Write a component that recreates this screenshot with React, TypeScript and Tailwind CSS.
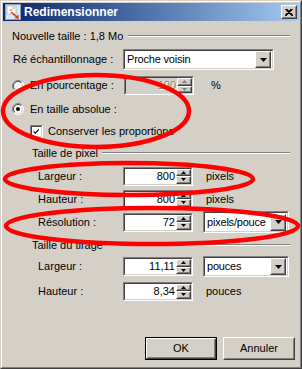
import type { ReactNode } from "react";

const font = { fontFamily: '"Liberation Sans", Arial, sans-serif' };

function Sunken({ className = "", inner = "bg-white", children }: { className?: string; inner?: string; children?: ReactNode }) {
  return (
    <div className={`border border-t-[#808080] border-l-[#808080] border-r-white border-b-white ${className}`}>
      <div className={`h-full w-full border border-t-[#404040] border-l-[#404040] border-r-[#d4d0c8] border-b-[#d4d0c8] flex items-center ${inner}`}>
        {children}
      </div>
    </div>
  );
}

function Raised({ className = "", children }: { className?: string; children?: ReactNode }) {
  return (
    <div className={`border border-t-white border-l-white border-r-[#404040] border-b-[#404040] bg-[#d4d0c8] ${className}`}>
      <div className="h-full w-full border border-t-[#d4d0c8] border-l-[#d4d0c8] border-r-[#808080] border-b-[#808080] flex items-center justify-center">
        {children}
      </div>
    </div>
  );
}

function Spinner({ disabled = false }: { disabled?: boolean }) {
  const c = disabled ? "#808080" : "#000";
  return (
    <div className="flex flex-col h-full w-[15px] shrink-0">
      <Raised className="flex-1">
        <svg width="5" height="3" viewBox="0 0 5 3"><path d="M2.5 0 L5 3 L0 3 Z" fill={c} /></svg>
      </Raised>
      <Raised className="flex-1">
        <svg width="5" height="3" viewBox="0 0 5 3"><path d="M0 0 L5 0 L2.5 3 Z" fill={c} /></svg>
      </Raised>
    </div>
  );
}

function NumField({ value, disabled = false }: { value: string; disabled?: boolean }) {
  return (
    <Sunken className="w-[70px] h-[19px]" inner={disabled ? "bg-[#d4d0c8]" : "bg-white"}>
      <span
        className={`flex-1 text-right pr-[1px] ${disabled ? "text-[#808080] [text-shadow:1px_1px_0_#fff]" : "text-black"}`}
      >
        {value}
      </span>
      <Spinner disabled={disabled} />
    </Sunken>
  );
}

function Select({ value, className = "" }: { value: string; className?: string }) {
  return (
    <Sunken className={className}>
      <span className="flex-1 pl-[2px] text-black whitespace-nowrap overflow-hidden tracking-[-0.2px]">{value}</span>
      <Raised className="w-[16px] h-[17px] mr-[1px] shrink-0">
        <svg width="7" height="4" viewBox="0 0 7 4"><path d="M0 0 L7 0 L3.5 4 Z" fill="#000" /></svg>
      </Raised>
    </Sunken>
  );
}

function Radio({ checked = false }: { checked?: boolean }) {
  return (
    <svg width="12" height="12" viewBox="0 0 12 12" className="shrink-0">
      <circle cx="6" cy="6" r="5.5" fill="white" />
      <path d="M2.1 9.9 A5.5 5.5 0 0 1 9.9 2.1" stroke="#808080" strokeWidth="1" fill="none" />
      <path d="M2.8 9.2 A4.5 4.5 0 0 1 9.2 2.8" stroke="#404040" strokeWidth="1" fill="none" />
      <path d="M9.9 2.1 A5.5 5.5 0 0 1 2.1 9.9" stroke="#ffffff" strokeWidth="1" fill="none" />
      <path d="M9.2 2.8 A4.5 4.5 0 0 1 2.8 9.2" stroke="#d4d0c8" strokeWidth="1" fill="none" />
      {checked && <circle cx="6" cy="6" r="2" fill="#000" />}
    </svg>
  );
}

function Checkbox() {
  return (
    <Sunken className="w-[13px] h-[13px] shrink-0">
      <svg width="11" height="11" viewBox="0 0 11 11">
        <path d="M2 4.5 L4 6.5 L8.5 2 L8.5 4 L4 8.5 L2 6.5 Z" fill="#000" />
      </svg>
    </Sunken>
  );
}

function Group({ label }: { label: string }) {
  return (
    <div className="flex items-center h-[14px] pl-[29px] pr-[9px]">
      <span className="whitespace-nowrap">{label}</span>
      <div className="flex-1 ml-[4px] border-t border-t-[#808080] border-b border-b-white" />
    </div>
  );
}

function Row({ label, children, className = "" }: { label: string; children: ReactNode; className?: string }) {
  return (
    <div className={`flex items-center pl-[35px] ${className}`}>
      <span className="w-[85px]">{label}</span>
      {children}
    </div>
  );
}

export default function App() {
  return (
    <div className="relative w-[302px] h-[369px] text-[11px] leading-none text-black select-none" style={font}>
      {/* WINDOW FRAME */}
      <div className="w-full h-full border border-t-[#d4d0c8] border-l-[#d4d0c8] border-r-[#404040] border-b-[#404040] bg-[#d4d0c8]">
        <div className="w-full h-full border border-t-white border-l-white border-r-[#808080] border-b-[#808080] p-[1px] flex flex-col">
          {/* TITLE BAR */}
          <div className="h-[18px] shrink-0 flex items-center bg-linear-to-r from-[#0a246a] to-[#a6caf0] pl-[2px] pr-[2px]">
            <svg width="16" height="16" viewBox="0 0 16 16" className="shrink-0">
              <rect x="0.5" y="0.5" width="15" height="15" fill="#dfe6ef" stroke="#8da2c0" />
              <rect x="2" y="2" width="9" height="8" fill="#fff" stroke="#9fb1c9" strokeWidth="0.8" />
              <path d="M4 7 L6 4.5 L8 7 Z" fill="#e8a060" />
              <circle cx="8.5" cy="4" r="1.2" fill="#f0c080" />
              <path d="M6 8 L13 14" stroke="#d04010" strokeWidth="1.6" />
              <path d="M13.8 14.8 L9.5 14.2 L13.2 10.5 Z" fill="#d04010" />
            </svg>
            <span className="ml-[3px] text-white font-bold text-[12px]">Redimensionner</span>
            <div className="flex-1" />
            <Raised className="w-[16px] h-[14px]">
              <svg width="8" height="7" viewBox="0 0 8 7">
                <path d="M0.5 0 L7.5 7 M1.5 0 L8 6.5 M7.5 0 L0.5 7 M6.5 0 L0 6.5" stroke="#000" strokeWidth="1.2" />
              </svg>
            </Raised>
          </div>

          {/* BODY */}
          <div className="flex flex-col">
            <div className="flex items-center h-[14px] mt-[8px] pl-[9px] pr-[9px]">
              <span className="whitespace-nowrap">Nouvelle taille : 1,8 Mo</span>
              <div className="flex-1 ml-[5px] border-t border-t-[#808080] border-b border-b-white" />
            </div>

            <div className="flex items-center mt-[6px] pl-[10px]">
              <span className="w-[110px]">Ré échantillonnage :</span>
              <Select value="Proche voisin" className="w-[151px] h-[21px]" />
            </div>

            <div className="flex items-center mt-[6px] pl-[9px] h-[19px]">
              <Radio />
              <span className="ml-[6px] w-[94px]">En pourcentage :</span>
              <NumField value="100" disabled />
              <span className="ml-[17px]">%</span>
            </div>

            <div className="flex items-center mt-[7px] pl-[9px] h-[14px]">
              <Radio checked />
              <span className="ml-[6px]">En taille absolue :</span>
            </div>

            <div className="flex items-center mt-[8px] pl-[27px] h-[14px]">
              <Checkbox />
              <span className="ml-[5px]">Conserver les proportions</span>
            </div>

            <div className="mt-[8px]">
              <Group label="Taille de pixel" />
            </div>

            <Row label="Largeur :" className="mt-[6px] h-[20px]">
              <NumField value="800" />
              <span className="ml-[13px]">pixels</span>
            </Row>
            <Row label="Hauteur :" className="mt-[3px] h-[20px]">
              <NumField value="800" />
              <span className="ml-[13px]">pixels</span>
            </Row>
            <Row label="Résolution :" className="mt-[2px] h-[22px]">
              <NumField value="72" />
              <Select value="pixels/pouce" className="ml-[10px] w-[86px] h-[22px]" />
            </Row>

            <div className="mt-[5px]">
              <Group label="Taille du tirage" />
            </div>

            <Row label="Largeur :" className="mt-[4px] h-[21px]">
              <NumField value="11,11" />
              <Select value="pouces" className="ml-[10px] w-[86px] h-[21px]" />
            </Row>
            <Row label="Hauteur :" className="mt-[4px] h-[20px]">
              <NumField value="8,34" />
              <span className="ml-[13px]">pouces</span>
            </Row>

            {/* BUTTONS */}
            <div className="flex justify-end gap-[6px] mt-[36px] pr-[4px]">
              <div className="border border-black">
                <Raised className="w-[70px] h-[21px]">OK</Raised>
              </div>
              <Raised className="w-[72px] h-[23px]">Annuler</Raised>
            </div>
          </div>
        </div>
      </div>

      {/* RED ANNOTATIONS */}
      <svg width="302" height="369" viewBox="0 0 302 369" className="absolute left-0 top-0 pointer-events-none">
        <ellipse cx="96" cy="111" rx="93" ry="36" fill="none" stroke="#ff0000" strokeWidth="4.5" />
        <ellipse cx="129" cy="179" rx="124" ry="16" fill="none" stroke="#ff0000" strokeWidth="4.5" />
        <ellipse cx="152" cy="226" rx="146" ry="18" fill="none" stroke="#ff0000" strokeWidth="4.5" />
      </svg>
    </div>
  );
}
